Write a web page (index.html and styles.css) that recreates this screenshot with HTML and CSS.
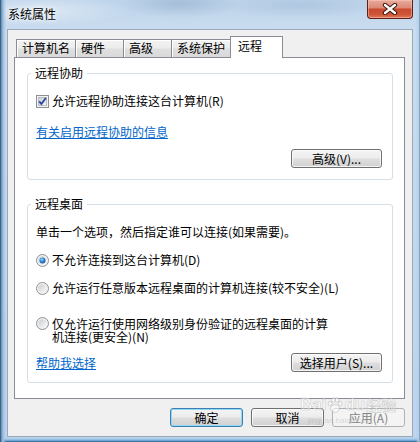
FILE: index.html
```html
<!DOCTYPE html>
<html lang="zh-CN">
<head>
<meta charset="utf-8">
<title>系统属性</title>
<link rel="stylesheet" href="styles.css">
</head>
<body>
<div class="window">
  <div class="titlebar">
    <span class="title">系统属性</span>
    <button class="close" aria-label="关闭">
      <svg width="16" height="12" viewBox="0 0 16 12">
        <path d="M3 2 L13 10 M13 2 L3 10" stroke="#3a1510" stroke-width="4.4" stroke-linecap="round" fill="none"/>
        <path d="M3 2 L13 10 M13 2 L3 10" stroke="#ffffff" stroke-width="2.4" stroke-linecap="round" fill="none"/>
      </svg>
    </button>
  </div>
  <div class="client">
    <div class="tabs">
      <div class="tab">计算机名</div>
      <div class="tab">硬件</div>
      <div class="tab">高级</div>
      <div class="tab">系统保护</div>
      <div class="tab active">远程</div>
    </div>
    <div class="panel">
      <fieldset class="group assist">
        <legend>远程协助</legend>
        <div class="row">
          <svg class="box" width="13" height="13" viewBox="0 0 13 13">
            <defs>
              <linearGradient id="cbg" x1="0" y1="0" x2="1" y2="1">
                <stop offset="0" stop-color="#cbcfd5"/>
                <stop offset="1" stop-color="#f6f6f6"/>
              </linearGradient>
              <radialGradient id="rsel" cx="0.4" cy="0.35" r="0.7">
                <stop offset="0" stop-color="#9ee0ff"/>
                <stop offset="0.5" stop-color="#2a86d8"/>
                <stop offset="1" stop-color="#1a4f9a"/>
              </radialGradient>
              <linearGradient id="rbg" x1="0" y1="0" x2="1" y2="1">
                <stop offset="0" stop-color="#c8ccd2"/>
                <stop offset="1" stop-color="#fbfbfb"/>
              </linearGradient>
            </defs>
            <rect x="0.5" y="0.5" width="12" height="12" fill="#f4f4f4" stroke="#8e8f8f"/>
            <rect x="2.5" y="2.5" width="8" height="8" fill="url(#cbg)" stroke="#b7bcc3"/>
            <path d="M3.2 6.4 L5.4 9 L9.8 3" fill="none" stroke="#2c4a99" stroke-width="1.9"/>
          </svg>
          <span>允许远程协助连接这台计算机(R)</span>
        </div>
        <a class="link info" href="#">有关启用远程协助的信息</a>
        <div class="btn-row">
          <button class="btn">高级(V)...</button>
        </div>
      </fieldset>
      <fieldset class="group desktop">
        <legend>远程桌面</legend>
        <p class="desc">单击一个选项，然后指定谁可以连接(如果需要)。</p>
        <div class="row opt first">
          <svg class="box" width="13" height="13" viewBox="0 0 13 13">
            <circle cx="6.5" cy="6.5" r="6" fill="#f2f2f2" stroke="#8e8f8f"/>
            <circle cx="6.5" cy="6.5" r="4.2" fill="url(#rbg)"/>
            <circle cx="6.5" cy="6.5" r="3" fill="url(#rsel)"/>
          </svg>
          <span>不允许连接到这台计算机(D)</span>
        </div>
        <div class="row opt">
          <svg class="box" width="13" height="13" viewBox="0 0 13 13">
            <circle cx="6.5" cy="6.5" r="6" fill="#f2f2f2" stroke="#8e8f8f"/>
            <circle cx="6.5" cy="6.5" r="4.2" fill="url(#rbg)"/>
          </svg>
          <span>允许运行任意版本远程桌面的计算机连接(较不安全)(L)</span>
        </div>
        <div class="row opt multi">
          <svg class="box" width="13" height="13" viewBox="0 0 13 13">
            <circle cx="6.5" cy="6.5" r="6" fill="#f2f2f2" stroke="#8e8f8f"/>
            <circle cx="6.5" cy="6.5" r="4.2" fill="url(#rbg)"/>
          </svg>
          <span class="label">仅允许运行使用网络级别身份验证的远程桌面的计算<br>机连接(更安全)(N)</span>
        </div>
        <div class="btn-row split">
          <a class="link" href="#">帮助我选择</a>
          <button class="btn">选择用户(S)...</button>
        </div>
      </fieldset>
    </div>
    <div class="footer">
      <button class="btn wide default">确定</button>
      <button class="btn wide">取消</button>
      <button class="btn wide disabled">应用(A)</button>
    </div>
  </div>
  <div class="watermark" aria-hidden="true">
    <span class="wm-main">Bai<svg width="18" height="18" viewBox="0 0 18 18"><g fill="rgba(255,255,255,0.55)" stroke="rgba(120,120,120,0.35)" stroke-width="0.8"><ellipse cx="9" cy="12.5" rx="4.5" ry="3.8"/><ellipse cx="4" cy="7.5" rx="1.8" ry="2.3"/><ellipse cx="7.3" cy="4" rx="1.8" ry="2.4"/><ellipse cx="11" cy="4" rx="1.8" ry="2.4"/><ellipse cx="14.2" cy="7.5" rx="1.8" ry="2.3"/></g></svg>du<span class="wm-cn">经验</span></span>
    <span class="wm-url">jingyan.baidu.com</span>
  </div>
</div>
</body>
</html>
```
FILE: styles.css
```css
* { box-sizing: border-box; }
html, body { margin: 0; padding: 0; }
body {
  width: 420px;
  height: 442px;
  overflow: hidden;
  background: #6f94b9;
  font-family: "Noto Sans CJK SC", "Noto Sans", sans-serif;
  font-size: 12px;
  color: #000;
}

.window {
  position: relative;
  width: 420px;
  height: 442px;
  display: flex;
  flex-direction: column;
  padding: 0 7px 5px;
  background:
    linear-gradient(90deg, #23405c 0, #5d88b0 1px, #9fc0df 3px, rgba(190,212,235,0) 6px),
    linear-gradient(270deg, #5b7ea0 0, #b4cde6 1px, rgba(190,212,235,0) 4px),
    linear-gradient(0deg, #2b4f73 0, #5c9bd0 1px, #a9cbea 3px, rgba(190,212,235,0) 5px),
    radial-gradient(ellipse 60px 14px at 180px 4px, rgba(120,150,185,0.35), rgba(120,150,185,0)),
    radial-gradient(ellipse 80px 12px at 300px 6px, rgba(130,160,195,0.25), rgba(130,160,195,0)),
    radial-gradient(ellipse 90px 16px at 40px 10px, rgba(255,255,255,0.45), rgba(255,255,255,0)),
    linear-gradient(180deg, #bcd3ea 0, #cadcef 29px, #bdd4ec 100%);
}

.titlebar {
  height: 29px;
  flex: none;
  display: flex;
  justify-content: space-between;
  align-items: flex-start;
}
.title {
  margin: 7px 0 0 1px;
  line-height: 14px;
  color: #000;
  text-shadow: 0 0 6px rgba(255,255,255,0.9), 0 0 3px rgba(255,255,255,0.9);
}
.close {
  width: 46px;
  height: 19px;
  padding: 0;
  display: flex;
  align-items: center;
  justify-content: center;
  border: 1px solid #5e2016;
  border-top: none;
  border-radius: 0 0 4px 4px;
  background: linear-gradient(180deg, #e8aa9b 0%, #dd8b78 42%, #c94a31 52%, #cf5535 80%, #e0785a 100%);
  box-shadow: inset 0 0 0 1px rgba(255,210,195,0.45);
}

.client {
  flex: 1;
  display: flex;
  flex-direction: column;
  background: #f0f0f0;
  border: 1px solid #97a9bb;
  padding: 6px 7px 0 6px;
}

.tabs {
  height: 21px;
  flex: none;
  display: flex;
  align-items: flex-end;
  padding-left: 2px;
}
.tab {
  height: 18px;
  min-width: 49px;
  padding: 0 5px;
  margin-right: -1px;
  border: 1px solid #898c95;
  border-bottom: none;
  line-height: 16px;
  white-space: nowrap;
  background: linear-gradient(180deg, #f3f3f3 0%, #ececec 45%, #dfdfdf 55%, #d9d9d9 100%);
  box-shadow: inset 1px 1px 0 #ffffff;
}
.tab.active {
  position: relative;
  z-index: 1;
  height: 22px;
  min-width: 53px;
  margin-bottom: -1px;
  padding: 0 6px 0 7px;
  line-height: 18px;
  background: #ffffff;
  box-shadow: none;
}

.panel {
  height: 342px;
  flex: none;
  border: 1px solid #898c95;
  background: #ffffff;
  padding: 8px 11px 0 12px;
}

.group {
  margin: 0;
  padding: 14px 10px 11px 8px;
  border: 1px solid #d5dfe5;
  border-radius: 3px;
  min-width: 0;
}
.group legend {
  margin-left: -5px;
  padding: 0 4px;
  line-height: 14px;
}
.desktop { margin-top: 17px; padding-bottom: 10px; }

.row {
  display: flex;
  align-items: center;
  height: 14px;
  line-height: 14px;
  white-space: nowrap;
}
.row .box { flex: none; margin-right: 3px; }

.link {
  display: block;
  width: max-content;
  color: #0066cc;
  text-decoration: underline;
  line-height: 14px;
}
.info { margin-top: 17px; }

.btn-row {
  margin-top: 10px;
  display: flex;
  justify-content: flex-end;
  align-items: center;
}
.btn-row.split { justify-content: space-between; margin-top: 10px; }

.desc { margin: 0; line-height: 14px; }
.opt { margin-top: 14px; }
.opt.multi {
  margin-top: 22px;
  height: 26px;
  align-items: flex-start;
  line-height: 13px;
}
.opt.multi .box { margin-top: 0; }

.btn {
  height: 19px;
  width: 91px;
  padding: 0;
  border: 1px solid #707070;
  border-radius: 3px;
  background: linear-gradient(180deg, #f4f4f4 0%, #ececec 48%, #dedede 52%, #d1d1d1 100%);
  box-shadow: inset 0 0 0 1px rgba(255,255,255,0.75);
  font-family: inherit;
  font-size: 12px;
  line-height: 17px;
  color: #000;
  white-space: nowrap;
}

.footer {
  margin-top: 9px;
  display: flex;
  justify-content: flex-end;
  gap: 8px;
}
.btn.wide { width: 73px; }
.btn.default {
  border-color: #3c7fb1;
  box-shadow: inset 0 0 0 1px #8fd9f7;
}
.btn.disabled {
  border-color: #adb2b5;
  background: #f4f4f4;
  box-shadow: none;
  color: #838383;
}

.watermark {
  position: absolute;
  left: 300px;
  top: 394px;
  display: flex;
  flex-direction: column;
  align-items: flex-start;
  pointer-events: none;
}
.wm-main {
  display: flex;
  align-items: center;
  font-family: "Liberation Sans", sans-serif;
  font-weight: bold;
  font-size: 17px;
  line-height: 22px;
  color: rgba(255,255,255,0.5);
  -webkit-text-stroke: 0.6px rgba(120,120,120,0.35);
}
.wm-cn {
  font-family: "Noto Sans CJK SC", sans-serif;
  font-size: 15px;
  margin-left: 1px;
}
.wm-url {
  margin-left: 8px;
  font-family: "Liberation Sans", sans-serif;
  font-size: 8px;
  line-height: 10px;
  color: rgba(150,150,150,0.35);
}
```
